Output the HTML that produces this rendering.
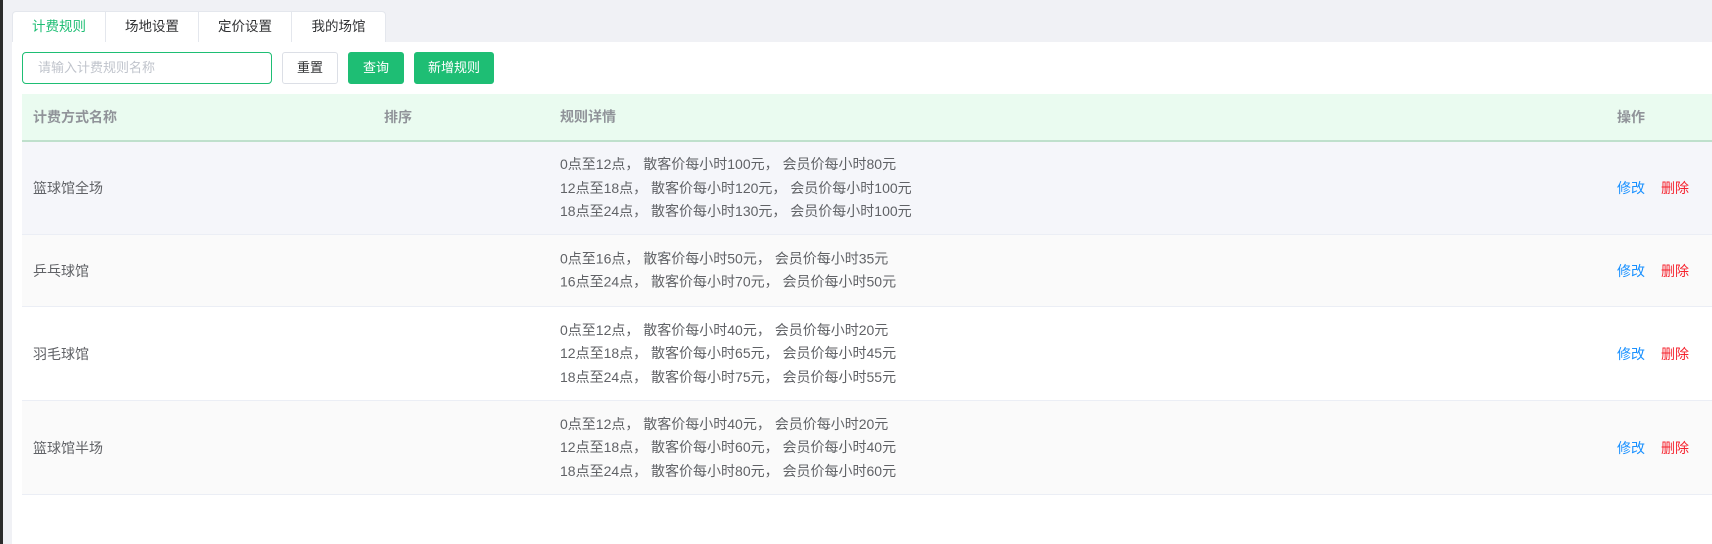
<!DOCTYPE html>
<html><head><meta charset="utf-8"><style>
*{margin:0;padding:0;box-sizing:border-box}
body{width:1712px;height:544px;background:#f0f1f5;font-family:"Liberation Sans","Noto Sans CJK SC",sans-serif;font-size:14px;color:#606266;position:relative;overflow:hidden}
.bar{position:absolute;left:0;top:0;width:3px;height:544px;background:#2b2b2b}
.tabs{position:absolute;left:12px;top:11px;height:31px;display:flex;background:#fff;border:1px solid #e4e7ed;border-bottom:none;border-radius:4px 4px 0 0}
.tab{width:93px;text-align:center;line-height:30px;color:#303133;border-right:1px solid #e4e7ed;font-size:13.5px}
.tab:last-child{border-right:none}
.tab.on{color:#1ebe74}
.panel{position:absolute;left:12px;top:42px;right:0;bottom:0;background:#fff}
.inp{position:absolute;left:22px;top:52px;width:250px;height:32px;border:1px solid #1ebe74;border-radius:4px;color:#c0c4cc;line-height:30px;padding-left:15px;font-size:13px}
.btn{position:absolute;top:52px;height:32px;line-height:30px;text-align:center;border-radius:3px;font-size:13px}
.b1{left:282px;width:56px;border:1px solid #dcdfe6;color:#303133;background:#fff}
.b2{left:348px;width:56px;background:#1ebe74;color:#fff;border:1px solid #1ebe74}
.b3{left:414px;width:80px;background:#1ebe74;color:#fff;border:1px solid #1ebe74}
.table{position:absolute;left:22px;top:94px;right:0}
.hd{height:48px;background:#eafbf0;border-bottom:2px solid #bfe0cc;position:relative;font-weight:bold;color:#909399}
.row{position:relative;border-bottom:1px solid #ebeef5}
.c{position:absolute;top:50%;transform:translateY(-50%);white-space:nowrap}
.c1{left:11px}.c2{left:362px}.c3{left:538px;line-height:23.5px}.c4{left:1595px}
.e{color:#1890ff}.d{color:#f5222d;margin-left:16px}
</style></head><body>
<div class="bar"></div>
<div class="panel"></div>
<div class="tabs"><div class="tab on">计费规则</div><div class="tab">场地设置</div><div class="tab">定价设置</div><div class="tab">我的场馆</div></div>
<div class="inp">请输入计费规则名称</div>
<div class="btn b1">重置</div><div class="btn b2">查询</div><div class="btn b3">新增规则</div>
<div class="table">
<div class="hd"><span class="c c1">计费方式名称</span><span class="c c2">排序</span><span class="c c3">规则详情</span><span class="c c4">操作</span></div>
<div class="row" style="height:93px;background:#f5f6fa"><span class="c c1">篮球馆全场</span><div class="c c3">0点至12点， 散客价每小时100元， 会员价每小时80元<br>12点至18点， 散客价每小时120元， 会员价每小时100元<br>18点至24点， 散客价每小时130元， 会员价每小时100元</div><span class="c c4"><span class="e">修改</span><span class="d">删除</span></span></div>
<div class="row" style="height:72px;background:#fafafa"><span class="c c1">乒乓球馆</span><div class="c c3">0点至16点， 散客价每小时50元， 会员价每小时35元<br>16点至24点， 散客价每小时70元， 会员价每小时50元</div><span class="c c4"><span class="e">修改</span><span class="d">删除</span></span></div>
<div class="row" style="height:94px;background:#fff"><span class="c c1">羽毛球馆</span><div class="c c3">0点至12点， 散客价每小时40元， 会员价每小时20元<br>12点至18点， 散客价每小时65元， 会员价每小时45元<br>18点至24点， 散客价每小时75元， 会员价每小时55元</div><span class="c c4"><span class="e">修改</span><span class="d">删除</span></span></div>
<div class="row" style="height:94px;background:#fafafa"><span class="c c1">篮球馆半场</span><div class="c c3">0点至12点， 散客价每小时40元， 会员价每小时20元<br>12点至18点， 散客价每小时60元， 会员价每小时40元<br>18点至24点， 散客价每小时80元， 会员价每小时60元</div><span class="c c4"><span class="e">修改</span><span class="d">删除</span></span></div>
</div>
</body></html>
